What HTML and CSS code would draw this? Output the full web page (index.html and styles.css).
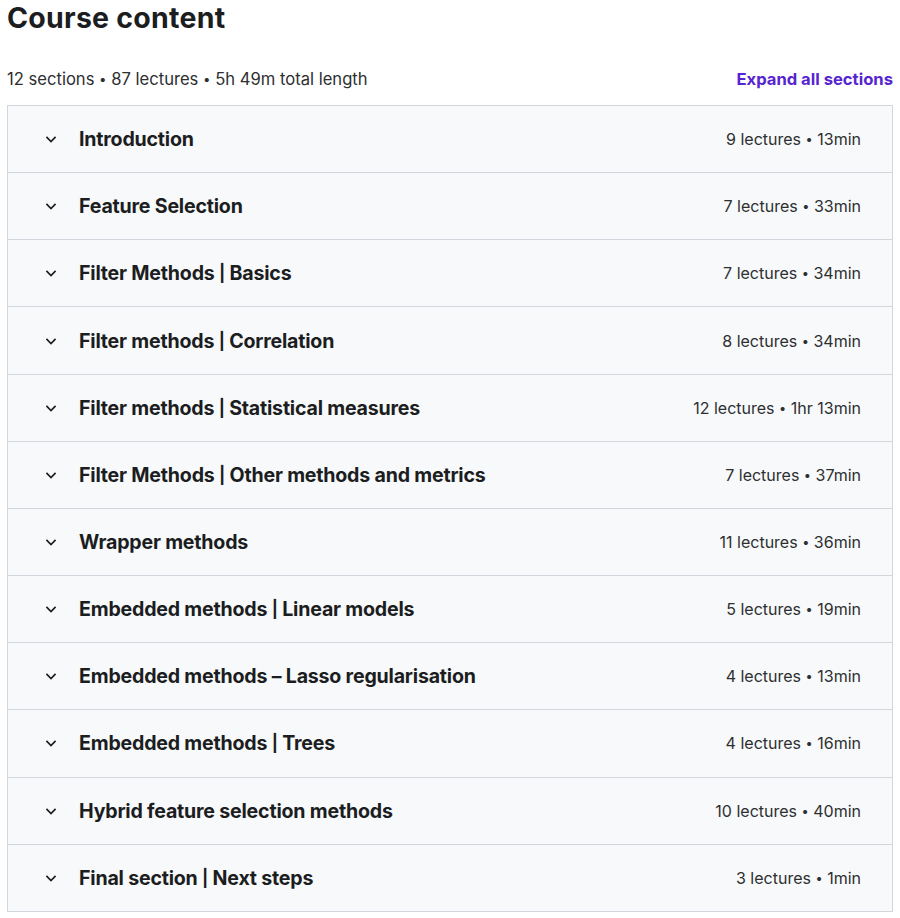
FILE: index.html
```html
<!DOCTYPE html>
<html>
<head>
<meta charset="utf-8">
<link rel="stylesheet" href="styles.css">
</head>
<body>
<div class="wrap">
  <h2 class="title">Course content</h2>
  <div class="summary">
    <span class="stats">12 sections <span class="dot">•</span> 87 lectures <span class="dot">•</span> 5h 49m total length</span>
    <button class="expand">Expand all sections</button>
  </div>
  <div class="sections">
    <div class="row"><span class="chev"><svg viewBox="0 0 24 24"><path d="M6.5 9.5l5.5 5.5 5.5-5.5"/></svg></span><span class="name">Introduction</span><span class="meta">9 lectures <span class="dot">•</span> 13min</span></div>
    <div class="row"><span class="chev"><svg viewBox="0 0 24 24"><path d="M6.5 9.5l5.5 5.5 5.5-5.5"/></svg></span><span class="name">Feature Selection</span><span class="meta">7 lectures <span class="dot">•</span> 33min</span></div>
    <div class="row"><span class="chev"><svg viewBox="0 0 24 24"><path d="M6.5 9.5l5.5 5.5 5.5-5.5"/></svg></span><span class="name">Filter Methods <span class="pipe">|</span> Basics</span><span class="meta">7 lectures <span class="dot">•</span> 34min</span></div>
    <div class="row"><span class="chev"><svg viewBox="0 0 24 24"><path d="M6.5 9.5l5.5 5.5 5.5-5.5"/></svg></span><span class="name">Filter methods <span class="pipe">|</span> Correlation</span><span class="meta">8 lectures <span class="dot">•</span> 34min</span></div>
    <div class="row"><span class="chev"><svg viewBox="0 0 24 24"><path d="M6.5 9.5l5.5 5.5 5.5-5.5"/></svg></span><span class="name">Filter methods <span class="pipe">|</span> Statistical measures</span><span class="meta">12 lectures <span class="dot">•</span> 1hr 13min</span></div>
    <div class="row"><span class="chev"><svg viewBox="0 0 24 24"><path d="M6.5 9.5l5.5 5.5 5.5-5.5"/></svg></span><span class="name">Filter Methods <span class="pipe">|</span> Other methods and metrics</span><span class="meta">7 lectures <span class="dot">•</span> 37min</span></div>
    <div class="row"><span class="chev"><svg viewBox="0 0 24 24"><path d="M6.5 9.5l5.5 5.5 5.5-5.5"/></svg></span><span class="name">Wrapper methods</span><span class="meta">11 lectures <span class="dot">•</span> 36min</span></div>
    <div class="row"><span class="chev"><svg viewBox="0 0 24 24"><path d="M6.5 9.5l5.5 5.5 5.5-5.5"/></svg></span><span class="name">Embedded methods <span class="pipe">|</span> Linear models</span><span class="meta">5 lectures <span class="dot">•</span> 19min</span></div>
    <div class="row"><span class="chev"><svg viewBox="0 0 24 24"><path d="M6.5 9.5l5.5 5.5 5.5-5.5"/></svg></span><span class="name">Embedded methods – Lasso regularisation</span><span class="meta">4 lectures <span class="dot">•</span> 13min</span></div>
    <div class="row"><span class="chev"><svg viewBox="0 0 24 24"><path d="M6.5 9.5l5.5 5.5 5.5-5.5"/></svg></span><span class="name">Embedded methods <span class="pipe">|</span> Trees</span><span class="meta">4 lectures <span class="dot">•</span> 16min</span></div>
    <div class="row"><span class="chev"><svg viewBox="0 0 24 24"><path d="M6.5 9.5l5.5 5.5 5.5-5.5"/></svg></span><span class="name">Hybrid feature selection methods</span><span class="meta">10 lectures <span class="dot">•</span> 40min</span></div>
    <div class="row"><span class="chev"><svg viewBox="0 0 24 24"><path d="M6.5 9.5l5.5 5.5 5.5-5.5"/></svg></span><span class="name">Final section <span class="pipe">|</span> Next steps</span><span class="meta">3 lectures <span class="dot">•</span> 1min</span></div>
  </div>
</div>
</body>
</html>
```

FILE: styles.css
```css
* { box-sizing: border-box; }
html, body { margin: 0; padding: 0; background: #fff; }
body {
  font-family: Inter, "Noto Sans", "Liberation Sans", sans-serif;
  color: #2d2f31;
}
.wrap {
  padding: 0 7px;
}
.title {
  margin: 0;
  font-size: 28.5px;
  line-height: 35px;
  font-weight: 700;
  color: #1c1d1f;
  letter-spacing: 0.25px;
}
.summary {
  display: flex;
  justify-content: space-between;
  align-items: center;
  margin-top: 31px;
  height: 26px;
  margin-bottom: 13px;
}
.stats {
  font-size: 16.6px;
  color: #2d2f31;
}
.dot {
  font-size: 0.8em;
  vertical-align: 0.1em;
}
.expand {
  border: 0;
  background: none;
  padding: 0;
  font-family: inherit;
  font-size: 16.6px;
  font-weight: 700;
  color: #5624d0;
  cursor: pointer;
}
.sections {
  border: 1px solid #d1d7dc;
  border-bottom: 0;
}
.row {
  display: flex;
  align-items: center;
  height: 67.17px;
  padding: 0 31px 0 33px;
  background: #f7f9fa;
  border-bottom: 1px solid #d1d7dc;
}
.chev {
  width: 20px;
  height: 20px;
  display: flex;
  margin-right: 18px;
}
.chev svg {
  width: 20px;
  height: 20px;
  fill: none;
  stroke: #1c1d1f;
  stroke-width: 2;
}
.name {
  flex: 1;
  font-size: 19.6px;
  font-weight: 700;
  color: #1c1d1f;
  letter-spacing: -0.2px;
}
.pipe {
  font-size: 0.86em;
  vertical-align: 0.06em;
}
.meta {
  font-size: 16px;
  color: #2d2f31;
}
```
